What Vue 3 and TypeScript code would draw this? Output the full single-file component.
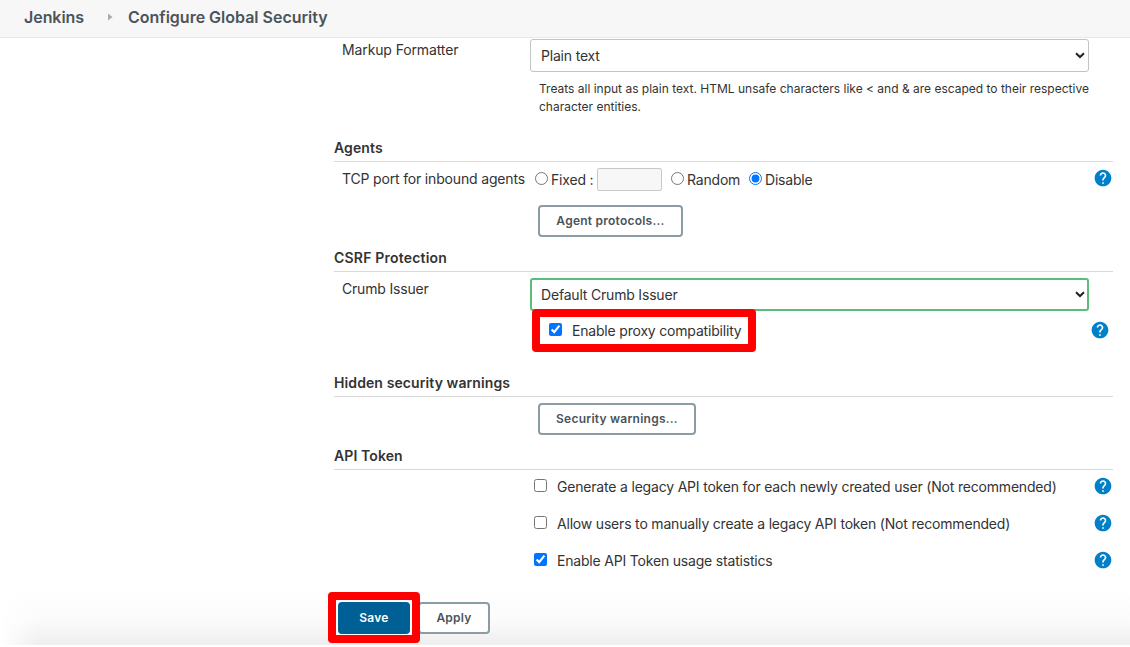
<script setup lang="ts">
import { ref } from 'vue'

interface TokenOption {
  label: string
  checked: boolean
}

const port = ref('disable')
const proxy = ref(true)
const tokenOptions = ref<TokenOption[]>([
  { label: 'Generate a legacy API token for each newly created user (Not recommended)', checked: false },
  { label: 'Allow users to manually create a legacy API token (Not recommended)', checked: false },
  { label: 'Enable API Token usage statistics', checked: true },
])
</script>

<template>
  <div class="page">
    <svg class="defs" width="0" height="0">
      <symbol id="help" viewBox="0 0 24 24">
        <path
          fill="#0080c8"
          d="M12 2C6.48 2 2 6.48 2 12s4.48 10 10 10 10-4.480 10-10S17.520 2 12 2zm1 17h-2v-2h2v2zm2.070-7.750l-.9.920C13.450 12.900 13 13.500 13 15h-2v-.5c0-1.100.45-2.100 1.170-2.830l1.240-1.260c.37-.36.59-.86.59-1.410 0-1.100-.9-2-2-2s-2 .9-2 2H8c0-2.210 1.790-4 4-4s4 1.790 4 4c0 .88-.36 1.680-.93 2.250z"
        />
      </symbol>
      <symbol id="chevron" viewBox="0 0 10 7">
        <path d="M1 1.200L5 5L9 1.200" fill="none" stroke="#222" stroke-width="2" />
      </symbol>
    </svg>

    <header class="crumbs">
      <span class="root">Jenkins</span>
      <svg class="sep" width="5" height="8" viewBox="0 0 5 8"><path d="M0 0.500L4.500 4L0 7.500Z" fill="#aaa" /></svg>
      <span class="current">Configure Global Security</span>
    </header>

    <main class="form">
      <div class="row markup">
        <span class="label">Markup Formatter</span>
        <div class="field">
          <div class="select"><span>Plain text</span><svg width="10" height="7"><use href="#chevron" /></svg></div>
          <p class="hint">Treats all input as plain text. HTML unsafe characters like &lt; and &amp; are escaped to their respective<br />character entities.</p>
        </div>
      </div>

      <h2>Agents</h2>
      <div class="row port">
        <span class="label">TCP port for inbound agents</span>
        <div class="field radios">
          <input v-model="port" type="radio" value="fixed" /><span class="r-fixed">Fixed :</span>
          <span class="portbox"></span>
          <input v-model="port" type="radio" value="random" /><span class="r-random">Random</span>
          <input v-model="port" type="radio" value="disable" /><span>Disable</span>
        </div>
        <svg class="help" width="20" height="20"><use href="#help" /></svg>
      </div>
      <div class="action"><button class="btn agent" type="button">Agent protocols...</button></div>

      <h2 class="wide">CSRF Protection</h2>
      <div class="row csrf">
        <span class="label">Crumb Issuer</span>
        <div class="field">
          <div class="select active"><span>Default Crumb Issuer</span><svg width="10" height="7"><use href="#chevron" /></svg></div>
          <label class="proxy"><input v-model="proxy" type="checkbox" /><span>Enable proxy compatibility</span></label>
        </div>
        <svg class="help low" width="20" height="20"><use href="#help" /></svg>
      </div>

      <h2>Hidden security warnings</h2>
      <div class="action warnings"><button class="btn security" type="button">Security warnings...</button></div>

      <h2>API Token</h2>
      <div class="tokens">
        <div v-for="option in tokenOptions" :key="option.label" class="token">
          <label><input v-model="option.checked" type="checkbox" /><span>{{ option.label }}</span></label>
          <svg class="help" width="20" height="20"><use href="#help" /></svg>
        </div>
      </div>
    </main>

    <footer class="bar">
      <div class="save-wrap"><button class="btn save" type="button">Save</button></div>
      <button class="btn apply" type="button">Apply</button>
    </footer>
  </div>
</template>

<style>
html,
body {
  margin: 0;
  background: #fff;
  overflow: hidden;
}
</style>

<style scoped>
.page {
  width: 1130px;
  height: 647px;
  display: flex;
  flex-direction: column;
  overflow: hidden;
  background: #fff;
  color: #333;
  font: 14px/20px Inter, "Liberation Sans", sans-serif;
  letter-spacing: -0.19px;
  white-space: nowrap;
}
.defs { position: absolute; }
svg { flex: none; }
input { margin: 0; width: 13px; height: 13px; flex: none; }

.crumbs {
  height: 38px;
  flex: none;
  display: flex;
  align-items: center;
  padding: 0 24px 3px;
  box-sizing: border-box;
  background: #f7f7f7;
  border-bottom: 1px solid #e6eaea;
  color: #4b545b;
  font-size: 16px;
  font-weight: 600;
  letter-spacing: 0;
}
.root { width: 60px; letter-spacing: -0.05px; }
.sep { margin: 0 15px 0 24px; }

.form {
  width: 779px;
  height: 550px;
  margin-left: 334px;
  flex: none;
}
.row { display: flex; align-items: flex-start; }
.label { width: 188px; margin-left: 8px; flex: none; }
.field { width: 559px; flex: none; }
.markup { box-sizing: border-box; height: 100px; padding-top: 1px; }
.markup .label { margin-top: 1px; letter-spacing: -0.12px; }
.select {
  box-sizing: border-box;
  height: 33px;
  display: flex;
  align-items: center;
  justify-content: space-between;
  padding: 1px 3px 0 10px;
  border: 1px solid #c3c3c3;
  border-radius: 3px;
  background: #fff;
}
.select svg { margin-bottom: 2px; }
.select.active { border: 2px solid #5bbd79; padding: 1px 2px 0 9px; }
.hint { margin: 8px 0 0 9px; font-size: 12px; line-height: 18px; letter-spacing: 0; }

h2 {
  box-sizing: border-box;
  height: 24px;
  margin: 0;
  border-bottom: 1px solid #d9d9d9;
  font-size: 14px;
  line-height: 20px;
  font-weight: 600;
  letter-spacing: 0.1px;
}
h2.wide { letter-spacing: 0.2px; }
.port { height: 43px; }
.port .label { margin-top: 7px; width: 193px; letter-spacing: -0.17px; }
.radios { display: flex; align-items: center; height: 23px; margin-top: 6px; width: 558px; }
.radios input { margin-bottom: 2px; }
.radios span { margin-left: 3px; }
.radios .r-fixed { width: 43px; }
.radios .portbox {
  box-sizing: border-box;
  width: 65px;
  height: 23px;
  margin: 0 9px 0 3px;
  border: 1px solid #c9c9c9;
  border-radius: 2px;
  background: #f7f7f7;
}
.radios .r-random { width: 62px; }
.port .help { margin-top: 6px; }
.action { box-sizing: border-box; height: 43px; padding-left: 204px; }
.warnings { height: 49px; padding-top: 6px; }

.btn {
  box-sizing: border-box;
  display: block;
  height: 32px;
  padding: 0;
  border: 2px solid #8c9ca5;
  border-radius: 4px;
  background: #fff;
  color: #4b545b;
  font: 600 12px/26px Inter, "Liberation Sans", sans-serif;
  letter-spacing: 0.24px;
  text-align: center;
}
.agent { width: 145px; }
.security { width: 158px; }

.csrf { height: 101px; position: relative; }
.csrf .label { margin-top: 7px; }
.csrf .select { margin-top: 6px; }
.proxy {
  position: absolute;
  top: 37px;
  left: 198px;
  box-sizing: border-box;
  width: 224px;
  height: 43px;
  display: flex;
  align-items: center;
  padding-left: 9px;
  border: 8px solid #f00;
  border-radius: 4px;
  background: #fff;
}
.proxy input { margin-bottom: 2px; }
.proxy span { margin-left: 10px; }
.csrf .low { margin: 48px 0 0 1px; }

.tokens { padding-top: 6px; }
.token { height: 37px; display: flex; align-items: flex-start; justify-content: space-between; padding-left: 200px; }
.token label { display: flex; align-items: center; height: 20px; margin-top: 1px; }
.token input { margin-bottom: 3px; }
.token span { margin-left: 10px; }

.bar {
  height: 57px;
  display: flex;
  align-items: flex-start;
  padding: 4px 0 0 328px;
  box-sizing: border-box;
  background:
    linear-gradient(90deg, #fff, rgba(255, 255, 255, 0) 40px),
    linear-gradient(#fff, #fbfbfb 55%, #eee);
}
.save-wrap {
  box-sizing: border-box;
  width: 92px;
  height: 51px;
  border: 8px solid #f00;
  border-radius: 4px;
  padding: 2px;
  background: #fff;
  z-index: 1;
}
.save { width: 72px; border-color: #005f94; background: #005f94; color: #fff; }
.apply { width: 72px; margin: 10px 0 0 -2px; }
</style>
